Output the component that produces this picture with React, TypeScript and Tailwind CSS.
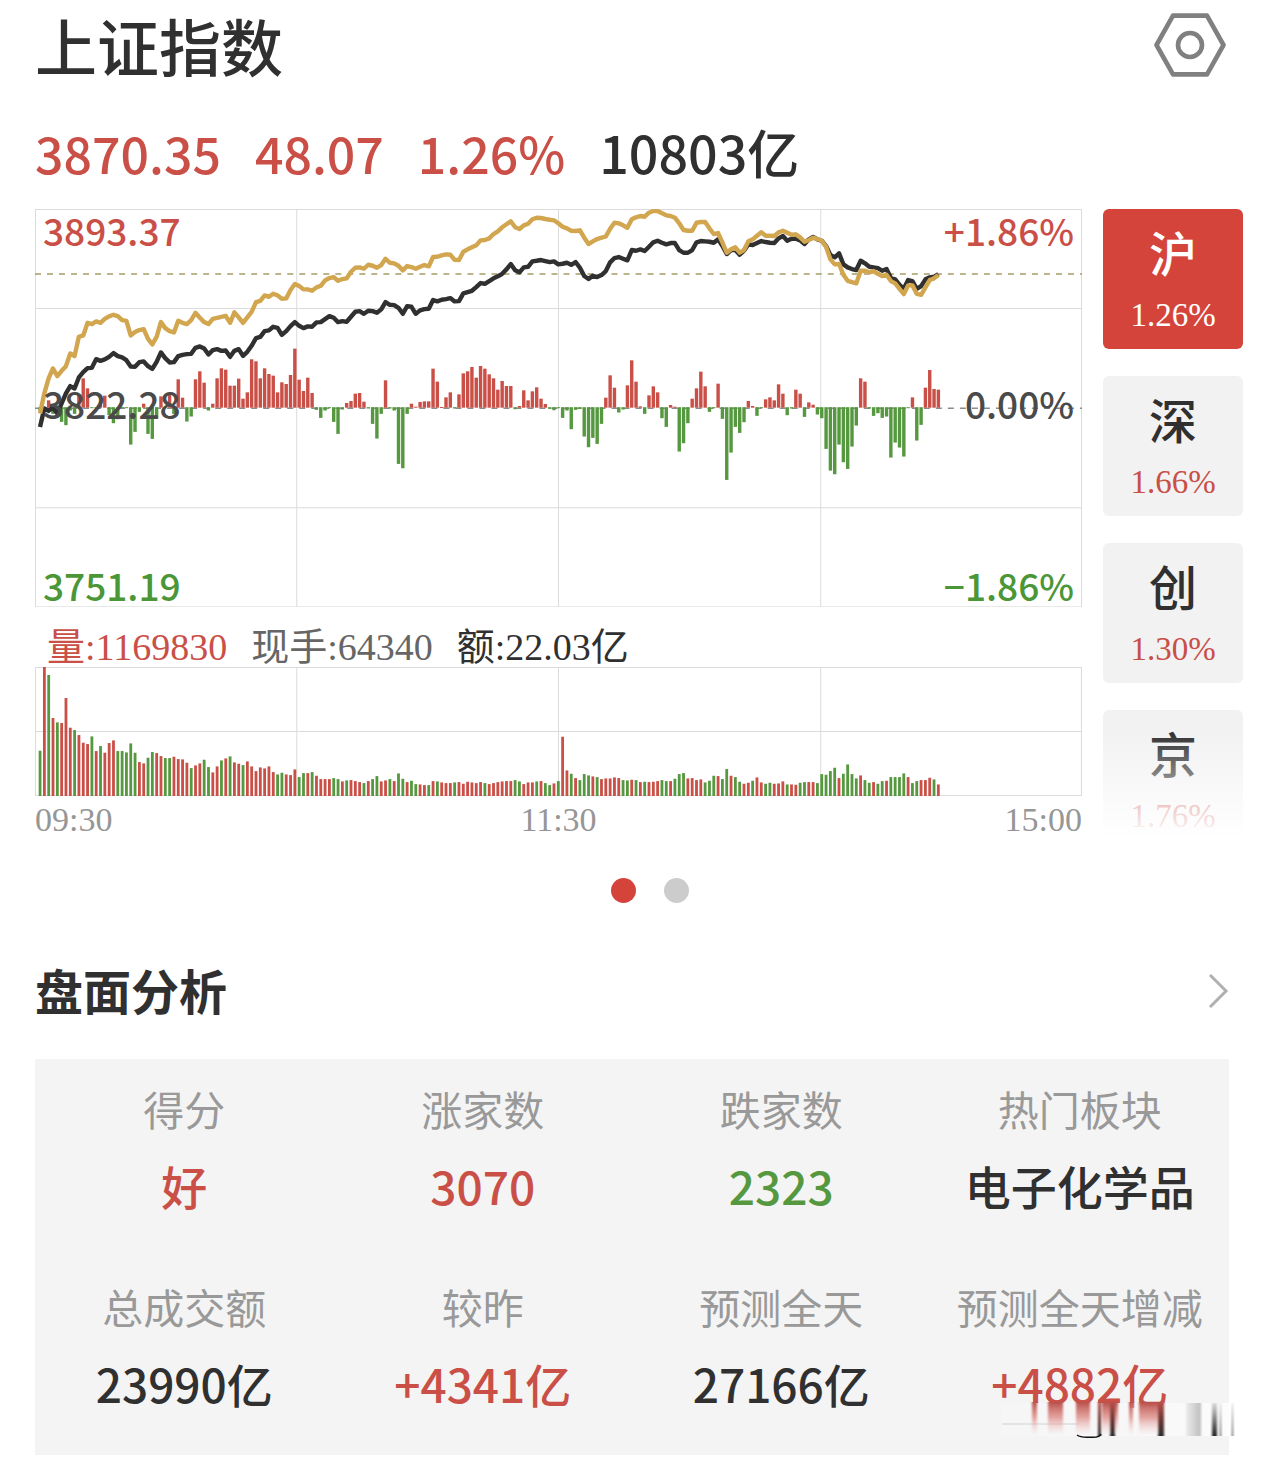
import { useState } from 'react';
import clsx from 'clsx';

const UP = '#c94f47';
const DOWN = '#55983f';
const GRID = '#dcdcdc';

// One entry per minute, three units to a pixel
const PRICE = [
  680, 625, 632, 622, 640, 610, 580, 558, 565, 532, 516, 504, 503, 477, 482, 478, 470, 459, 468, 472,
  480, 499, 500, 486, 484, 498, 506, 485, 457, 474, 487, 486, 468, 464, 462, 461, 443, 439, 445, 463,
  450, 447, 452, 451, 470, 452, 447, 467, 455, 437, 414, 410, 393, 391, 380, 383, 404, 393, 378,
  366, 377, 384, 379, 380, 367, 366, 357, 348, 353, 366, 363, 365, 350, 335, 333, 341, 332, 333, 338,
  328, 306, 314, 315, 323, 341, 318, 320, 341, 331, 327, 326, 300, 304, 299, 297, 294, 304, 303, 280,
  276, 272, 261, 249, 251, 243, 235, 229, 221, 208, 192, 211, 217, 202, 200, 184, 182, 180, 183, 186,
  184, 193, 191, 188, 194, 186, 203, 228, 237, 227, 231, 225, 213, 187, 174, 171, 176, 181, 150, 152,
  148, 153, 140, 127, 122, 128, 133, 129, 129, 150, 158, 158, 150, 127, 123, 124, 125, 128, 118, 138,
  162, 150, 150, 164, 152, 132, 135, 129, 123, 126, 128, 129, 115, 108, 122, 116, 116, 121, 132, 118,
  111, 118, 122, 138, 165, 172, 160, 193, 202, 207, 210, 182, 190, 200, 202, 204, 212, 207, 234, 238,
  254, 266, 240, 243, 266, 258, 238, 232, 230, 222,
];

const AVERAGE = [
  640, 580, 535, 505, 528, 512, 498, 460, 468, 410, 406, 368, 372, 364, 368, 356, 349, 344, 348, 360,
  362, 406, 396, 390, 387, 416, 433, 410, 366, 384, 393, 397, 362, 368, 372, 360, 338, 353, 366, 372,
  356, 353, 350, 347, 368, 337, 352, 368, 352, 335, 306, 302, 286, 290, 281, 286, 296, 295, 270,
  252, 258, 268, 268, 272, 262, 257, 241, 234, 231, 242, 237, 235, 215, 203, 202, 206, 194, 197, 203,
  195, 176, 188, 190, 197, 211, 198, 201, 206, 200, 195, 199, 171, 170, 166, 163, 164, 179, 180, 155,
  148, 142, 136, 121, 120, 115, 102, 94, 82, 73, 64, 82, 87, 76, 71, 58, 53, 54, 57, 59,
  61, 70, 80, 85, 92, 93, 91, 113, 132, 124, 117, 113, 109, 86, 68, 70, 76, 83, 58, 52,
  48, 50, 38, 33, 33, 40, 46, 48, 53, 70, 90, 92, 92, 68, 66, 66, 85, 102, 99, 128,
  158, 148, 142, 158, 150, 124, 118, 107, 97, 107, 107, 108, 97, 92, 98, 104, 103, 112, 125, 120,
  113, 117, 122, 140, 178, 193, 192, 224, 242, 246, 250, 212, 212, 217, 213, 221, 228, 224, 243, 250,
  266, 282, 256, 256, 281, 284, 262, 240, 235, 225,
];

const MOMENTUM = [
  -10, 0, 22, -20, -8, -44, -54, -10, -20, 40, 88, 58, -2, -2, 8, 36, -24, -48, -36, -3,
  -2, -112, -74, -14, 12, -80, -95, -34, 34, 0, 44, -20, 85, 30, -43, -28, 85, 109, 75, -10,
  12, 88, 118, 114, 66, 66, 87, 27, 46, 145, 139, 88, 118, 101, 96, 46, 76, 71, 98,
  177, 84, 50, 90, 44, -8, -32, -10, -2, -44, -80, -7, 14, 20, 42, 44, 18, -4, -50, -94,
  -20, 82, -4, -10, -170, -183, -20, 12, 3, 17, 19, 19, 117, 78, 2, 31, 46, -4, 40, 103,
  109, 122, 90, 125, 117, 100, 88, 54, 80, 65, 65, -6, 5, 52, 22, 49, 61, 27, 11, -5,
  -9, 0, -32, -10, -66, -8, -5, -88, -120, -92, -110, -50, 30, 97, 60, -16, -7, 67, 142, 78,
  4, -20, 37, 64, 46, -33, -59, 8, 3, -133, -108, -48, 27, 58, 108, 64, -14, -3, 72, -35,
  -218, -136, -59, -77, -45, 20, 5, -26, -3, 25, 31, 22, 70, 42, -24, -4, 54, 42, -29, 16,
  9, -22, -33, -125, -190, -201, -112, -165, -185, -118, -55, 88, 78, -4, -26, -18, -32, -28, -151, -106,
  -121, -148, 0, 31, -100, -53, 60, 113, 56, 54,
];

// Negative: the minute closed lower
const VOLUME = [
  -136, 387, -363, 234, -221, 219, 294, 205, -198, 183, 160, 156, -179, 135, -150, 130, 159, 167, -135, -135,
  -131, -158, -130, 102, 98, -115, -132, 129, 120, -114, -114, 118, 111, 110, 100, -84, 92, 98, -109, -87,
  71, 89, -107, 113, -119, 101, 97, -93, 104, 89, 75, 86, 83, 89, 72, -65, -70, 65, 63, 80,
  -57, -69, 69, -72, 61, 51, 51, 51, -54, -51, 44, -47, 48, 45, 42, -39, 45, -51, -60, 44,
  47, -51, 45, -68, -52, 42, -46, -36, 35, 33, -33, 45, -44, 41, 39, 39, -41, 42, 37, 43,
  41, 39, 42, -39, 36, 39, 42, 44, 45, 45, -48, -44, 36, 41, 41, -44, 45, -39, -33, 38,
  -45, 178, 77, -67, 54, -48, -66, -62, 59, -57, 51, 53, 53, 56, 54, -48, -47, 49, -48,
  42, -43, 42, 43, 45, -48, -45, 45, -52, -66, -69, 53, 54, 48, 50, -41, -46, -61, 60, -51,
  -81, 61, -57, -43, 37, 40, -46, 56, 41, -37, -40, 37, 38, 44, -35, 35, 34, -40, -42, 42,
  42, -39, -66, -64, -75, -85, 54, -67, -95, -66, -53, 62, -48, -40, 42, -37, -45, 46, -57, -57,
  -57, -68, 57, -39, -45, 48, 48, 55, -50, 35,
];

const MARKETS = [
  { name: '沪', change: '1.26%' },
  { name: '深', change: '1.66%' },
  { name: '创', change: '1.30%' },
  { name: '京', change: '1.76%' },
];

const ANALYSIS = [
  { label: '得分', value: '好', color: 'text-[#c94f47]' },
  { label: '涨家数', value: '3070', color: 'text-[#c94f47]' },
  { label: '跌家数', value: '2323', color: 'text-[#55983f]' },
  { label: '热门板块', value: '电子化学品', color: 'text-[#303030]' },
  { label: '总成交额', value: '23990亿', color: 'text-[#303030]' },
  { label: '较昨', value: '+4341亿', color: 'text-[#c94f47]' },
  { label: '预测全天', value: '27166亿', color: 'text-[#303030]' },
  { label: '预测全天增减', value: '+4882亿', color: 'text-[#c94f47]' },
];

const minuteX = (i: number) => 5 + i * 4.315;

const toPoints = (series: number[]) =>
  series.map((v, i) => `${minuteX(i).toFixed(1)},${((v - 27) / 3).toFixed(1)}`).join(' ');

function PriceChart() {
  return (
    <svg viewBox="0 0 1046 398" className="block w-full" role="img" aria-label="分时走势">
      <g stroke={GRID} strokeWidth="1">
        <rect x="0.5" y="0.5" width="1045" height="397" fill="none" />
        <path d="M0 99.5H1046M0 298.5H1046M261.5 0V398M523 0V398M785 0V398" />
      </g>
      <path d="M0 199H1046" stroke="#8c8c8c" strokeWidth="1.5" strokeDasharray="6 6" />
      {MOMENTUM.map((v, i) => (
        <rect
          key={i}
          x={minuteX(i) - 1.7}
          y={v > 0 ? 198.5 - v / 3 : 198}
          width="3.4"
          height={Math.max(Math.abs(v) / 3, 1)}
          fill={v > 0 ? UP : DOWN}
        />
      ))}
      <path d="M0 65H1046" stroke="#a89c6a" strokeWidth="1.6" strokeDasharray="6 6" />
      <g fill="none" strokeWidth="4.4" strokeLinejoin="round">
        <polyline points={toPoints(PRICE)} stroke="#303030" />
        <polyline points={toPoints(AVERAGE)} stroke="#d2a54f" />
      </g>
    </svg>
  );
}

function VolumeChart() {
  return (
    <svg viewBox="0 0 1046 129" className="block w-full" role="img" aria-label="成交量">
      <g stroke={GRID} strokeWidth="1">
        <rect x="0.5" y="0.5" width="1045" height="128" fill="none" />
        <path d="M0 64.5H1046M261.5 0V129M523 0V129M785 0V129" />
      </g>
      {VOLUME.map((v, i) => (
        <rect
          key={i}
          x={minuteX(i) - 1.4}
          y={129 - Math.abs(v) / 3}
          width="2.8"
          height={Math.abs(v) / 3}
          fill={v > 0 ? UP : DOWN}
        />
      ))}
    </svg>
  );
}

// Smeared stamp over the panel's corner
function Smear() {
  return (
    <svg
      viewBox="0 0 234 36"
      className="pointer-events-none absolute -right-1.5 bottom-[17px] h-9 w-[234px]"
      aria-hidden="true"
    >
      <defs>
        <linearGradient id="haze" x1="0" x2="1" y1="0" y2="0">
          <stop offset="0" stopColor="#fff" stopOpacity="0.2" />
          <stop offset="0.6" stopColor="#fff" stopOpacity="0.3" />
          <stop offset="1" stopColor="#fff" stopOpacity="0.8" />
        </linearGradient>
        <linearGradient id="drip" x1="0" x2="0" y1="0" y2="1">
          <stop offset="0" stopColor="#b9504a" />
          <stop offset="0.5" stopColor="#e0928d" stopOpacity="0.8" />
          <stop offset="1" stopColor="#f4dedd" stopOpacity="0.2" />
        </linearGradient>
        <linearGradient id="ink" x1="0" x2="0" y1="0" y2="1">
          <stop offset="0" stopColor="#b9504a" />
          <stop offset="0.5" stopColor="#6e3836" />
          <stop offset="1" stopColor="#2c2c2c" />
        </linearGradient>
        <linearGradient id="ash" x1="0" x2="1" y1="0" y2="0">
          <stop offset="0" stopColor="#ececec" />
          <stop offset="1" stopColor="#bdbdbd" />
        </linearGradient>
        <linearGradient id="soot" x1="0" x2="0" y1="0" y2="1">
          <stop offset="0" stopColor="#dcdcdc" />
          <stop offset="1" stopColor="#222" />
        </linearGradient>
        <filter id="soften" x="-5%" width="110%" y="0" height="1">
          <feGaussianBlur stdDeviation="1 0" />
        </filter>
      </defs>
      <rect y="1" width="234" height="33" fill="url(#haze)" />
      <path d="M1 22H78" stroke="#d2d2d2" strokeWidth="1.2" />
      <g filter="url(#soften)">
        <g fill="url(#drip)">
          <rect x="31" width="5" height="32" />
          <rect x="47" width="15" height="32" />
          <rect x="75" width="14" height="32" />
          <rect x="101" width="9" height="32" />
          <rect x="113" width="4" height="32" />
          <rect x="128" width="4" height="32" />
          <rect x="138" width="19" height="32" />
        </g>
        <g fill="url(#ink)">
          <rect x="97" width="3" height="34" />
          <rect x="109" width="5" height="34" />
          <rect x="157" width="6" height="34" />
        </g>
        <rect x="185" y="1" width="15" height="33" fill="url(#ash)" />
        <g fill="url(#soot)">
          <rect x="211" y="1" width="5" height="33" />
          <rect x="219" y="1" width="1" height="33" />
          <rect x="231" y="1" width="1" height="33" />
        </g>
      </g>
      <path d="M76 33Q79 35.3 86 35.3H92Q99 35.3 100 32" fill="none" stroke="#111" strokeWidth="1.4" />
    </svg>
  );
}

export default function App() {
  const [market, setMarket] = useState('沪');
  const [page, setPage] = useState(0);

  return (
    <main className="bg-white pb-2.5 pl-[35px] font-['Noto_Sans_CJK_SC',sans-serif] text-[#303030]">
      {/* Title */}
      <header className="flex h-[90px] items-center justify-between pr-[38px]">
        <h1 className="text-[62px] leading-[90px] font-medium">上证指数</h1>
        <button type="button" aria-label="设置">
          <svg viewBox="0 0 72 64" className="block h-16 w-[72px]" fill="none" stroke="#808080" strokeWidth="4.6">
            <path d="M19 2.6H53L69.5 32L53 61.4H19L2.5 32Z" strokeLinejoin="round" />
            <circle cx="36" cy="32" r="12" />
          </svg>
        </button>
      </header>

      {/* Quote */}
      <div className="flex h-[119px] items-center gap-[34px] pt-1 text-[50px] leading-[52px] font-medium text-[#c94f47]">
        <span>3870.35</span>
        <span>48.07</span>
        <span>1.26%</span>
        <span className="text-[52px] text-[#303030]">10803亿</span>
      </div>

      <div className="flex gap-[21px] pr-[21px]">
        <div className="min-w-0 flex-1">
          <div className="relative">
            <PriceChart />
            <div className="absolute inset-0 flex justify-between px-2 pt-px text-[37px] leading-10 font-medium">
              <div>
                <p className="text-[#c94f47]">3893.37</p>
                <p className="mt-[133px] text-[#4a4a4a]">3822.28</p>
                <p className="mt-[142px] text-[#4b9636]">3751.19</p>
              </div>
              <div className="text-right">
                <p className="text-[#c94f47]">+1.86%</p>
                <p className="mt-[133px] text-[#4a4a4a]">0.00%</p>
                <p className="mt-[142px] text-[#4b9636]">−1.86%</p>
              </div>
            </div>
          </div>

          <div className="flex h-[60px] items-end gap-6 pl-3 font-['Liberation_Serif','Noto_Sans_CJK_SC',serif] text-[38px] leading-10">
            <span className="text-[#c94f47]">量:1169830</span>
            <span className="text-[#666666]">现手:64340</span>
            <span>额:22.03亿</span>
          </div>
          <VolumeChart />
          <div className="flex justify-between font-['Liberation_Serif',serif] text-[34px] leading-[48px] text-[#969696]">
            <span>09:30</span>
            <span>11:30</span>
            <span>15:00</span>
          </div>
        </div>

        {/* Market tabs, the last one fades out */}
        <div className="relative w-[140px] shrink-0">
          <div className="flex h-0 min-h-full flex-col gap-[27px] overflow-hidden">
            {MARKETS.map(({ name, change }) => (
              <button
                key={name}
                type="button"
                onClick={() => setMarket(name)}
                className={clsx(
                  'flex h-[140px] shrink-0 flex-col items-center rounded-md pt-2.5',
                  market === name ? 'bg-[#d5443b] text-white' : 'bg-[#f2f2f2] text-[#303030]'
                )}
              >
                <span className="text-[48px] leading-[64px] font-medium">{name}</span>
                <span
                  className={clsx(
                    "font-['Liberation_Serif',serif] text-[33px] leading-[64px]",
                    market === name ? 'text-white' : 'text-[#c94f47]'
                  )}
                >
                  {change}
                </span>
              </button>
            ))}
          </div>
          <div className="pointer-events-none absolute inset-x-0 bottom-0 h-28 bg-linear-to-b from-white/0 to-white to-95%" />
        </div>
      </div>

      {/* Pager */}
      <div className="flex justify-center gap-7 pt-[34px]">
        {[0, 1].map((i) => (
          <button
            key={i}
            type="button"
            aria-label={`第${i + 1}页`}
            onClick={() => setPage(i)}
            className={clsx('size-[25px] rounded-full', page === i ? 'bg-[#d5443b]' : 'bg-[#cccccc]')}
          />
        ))}
      </div>

      {/* Analysis */}
      <section className="mt-16 pr-[35px]">
        <div className="flex h-12 items-center justify-between">
          <h2 className="self-start text-[48px] leading-[44px] font-bold">盘面分析</h2>
          <button type="button" aria-label="更多">
            <svg viewBox="0 0 21 36" className="block h-9 w-[21px]" fill="none" stroke="#b0b0b0" strokeWidth="3">
              <path d="M2 2L18 18L2 34" />
            </svg>
          </button>
        </div>
        <div className="relative mt-11 bg-[#f4f4f4]">
          <dl className="grid grid-cols-4 text-center">
            {ANALYSIS.map(({ label, value, color }) => (
              <div key={label} className="pt-[18px] pb-[26px] whitespace-nowrap">
                <dt className="text-[41px] leading-[62px] text-[#999999]">{label}</dt>
                <dd className={clsx('text-[46px] leading-[92px] font-medium', color)}>{value}</dd>
              </div>
            ))}
          </dl>
          <Smear />
        </div>
      </section>
    </main>
  );
}
